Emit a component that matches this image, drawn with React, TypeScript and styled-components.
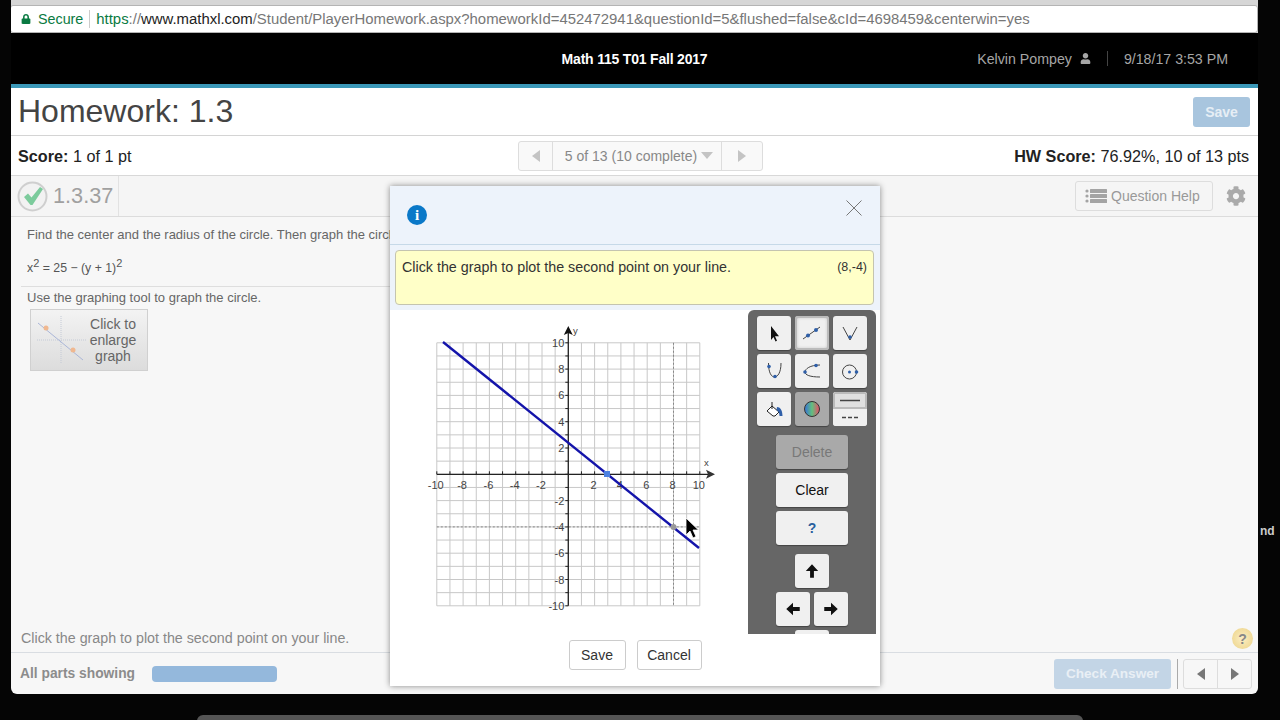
import React from 'react';
import styled, { createGlobalStyle } from 'styled-components';
import { FaCog, FaLock, FaUser } from 'react-icons/fa';

const GlobalStyle = createGlobalStyle`
  html, body {
    margin: 0;
    padding: 0;
    height: 720px;
    overflow: hidden;
    background: #050505;
    font-family: "Liberation Sans", Arial, sans-serif;
  }
`;

const Screen = styled.div`
  position: relative;
  width: 1280px;
  height: 720px;
  overflow: hidden;
`;

const Page = styled.div`
  display: flex;
  flex-direction: column;
  width: 1247px;
  height: 694px;
  margin-left: 11px;
  border-radius: 0 0 6px 6px;
  overflow: hidden;
  background: #f7f7f7;
`;

const Chrome = styled.div`
  height: 33px;
  padding-top: 5px;
  box-sizing: border-box;
  background: #d6d6d6;
`;

const AddressBar = styled.div`
  display: flex;
  align-items: center;
  height: 28px;
  box-sizing: border-box;
  margin-left: -1px;
  padding-left: 10px;
  background: #fff;
  border: 1px solid #b4b4b4;
  border-radius: 3px;
  font-size: 14.9px;
  color: #777;
  white-space: nowrap;
`;

const Secure = styled.span`
  display: flex;
  align-items: center;
  gap: 7px;
  padding-right: 6px;
  margin-right: 6px;
  border-right: 1px solid #ccc;
  color: #0a7a42;
  font-size: 14.3px;
  line-height: 18px;
`;

const Host = styled.span`
  color: #222;
`;

const Scheme = styled.span`
  color: #0a7a42;
`;

const TopBar = styled.div`
  display: grid;
  grid-template-columns: 1fr auto 1fr;
  align-items: center;
  height: 51px;
  background: #000;
  border-bottom: 4px solid #3b98b8;
`;

const CourseName = styled.div`
  grid-column: 2;
  color: #fff;
  font-size: 14px;
  font-weight: bold;
  letter-spacing: -0.2px;
`;

const UserInfo = styled.div`
  display: flex;
  justify-content: flex-end;
  align-items: center;
  padding-right: 30px;
  color: #a6a6a6;
  font-size: 14.2px;
`;

const UserDivider = styled.span`
  width: 1px;
  height: 15px;
  margin: 0 16px;
  background: #444;
`;

const TitleRow = styled.div`
  display: flex;
  align-items: center;
  justify-content: space-between;
  height: 47px;
  padding: 0 8px 0 7px;
  background: #fff;
  border-bottom: 1px solid #d4d4d4;
`;

const Title = styled.h1`
  margin: 0;
  color: #444;
  font-size: 32px;
  font-weight: normal;
`;

const SaveTop = styled.button`
  width: 57px;
  height: 30px;
  padding: 0;
  border: 0;
  border-radius: 3px;
  background: #a8c5de;
  color: #e6eef5;
  font: bold 14px "Liberation Sans", Arial, sans-serif;
`;

const ScoreRow = styled.div`
  display: grid;
  grid-template-columns: 1fr auto 1fr;
  align-items: center;
  height: 39px;
  padding: 0 9px 0 7px;
  background: #fff;
  border-bottom: 1px solid #d8d8d8;
  color: #222;
  font-size: 16.2px;
`;

const ScoreText = styled.div`
  padding-top: 1px;
`;

const ScoreRight = styled(ScoreText)`
  text-align: right;
`;

const Pager = styled.div`
  display: flex;
  height: 30px;
  margin-left: 14px;
  border: 1px solid #ddd;
  border-radius: 3px;
  box-sizing: border-box;
  background: #f9f9f9;
  color: #888;
  font-size: 14px;
`;

const PagerArrow = styled.div<{ $w: number }>`
  display: flex;
  align-items: center;
  justify-content: center;
  width: ${(p) => p.$w}px;
`;

const PagerLabel = styled.div`
  display: flex;
  align-items: center;
  gap: 4px;
  width: 170px;
  box-sizing: border-box;
  padding-left: 4px;
  justify-content: center;
  border-left: 1px solid #ddd;
  border-right: 1px solid #ddd;
`;

const Triangle = styled.span<{ $dir: 'left' | 'right' | 'down'; $color?: string; $size?: number }>`
  display: inline-block;
  width: 0;
  height: 0;
  ${({ $dir, $color = '#c4c4c4', $size = 6 }) =>
    $dir === 'left'
      ? `border-top: ${$size}px solid transparent; border-bottom: ${$size}px solid transparent; border-right: ${$size * 1.4}px solid ${$color};`
      : $dir === 'right'
        ? `border-top: ${$size}px solid transparent; border-bottom: ${$size}px solid transparent; border-left: ${$size * 1.4}px solid ${$color};`
        : `border-left: ${$size}px solid transparent; border-right: ${$size}px solid transparent; border-top: ${$size * 1.3}px solid ${$color};`}
`;

const QuestionRow = styled.div`
  display: flex;
  align-items: center;
  height: 40px;
  background: #f5f5f5;
  border-bottom: 1px solid #dcdcdc;
  flex-shrink: 0;
`;

const QuestionId = styled.div`
  display: flex;
  align-items: center;
  gap: 5px;
  height: 100%;
  width: 108px;
  box-sizing: border-box;
  padding-left: 6px;
  border-right: 1px solid #e2e2e2;
  color: #a0a0a0;
  font-size: 21.7px;
`;

const HelpButton = styled.div`
  display: flex;
  align-items: center;
  gap: 4px;
  width: 138px;
  height: 30px;
  box-sizing: border-box;
  margin-left: auto;
  padding-left: 9px;
  border: 1px solid #ddd;
  border-radius: 3px;
  color: #999;
  font-size: 14px;
`;

const GearSlot = styled.div`
  display: flex;
  justify-content: center;
  width: 45px;
  color: #aaa;
  font-size: 20px;
`;

const Content = styled.div`
  flex: 1;
  padding: 10px 0 0 16px;
  color: #666;
  font-size: 13px;
`;

const Prompt = styled.p`
  margin: 0;
  line-height: 16px;
  white-space: nowrap;
`;

const Equation = styled.p`
  width: 500px;
  margin: 16px 0 0 -6px;
  padding: 0 0 9px 6px;
  line-height: 18px;
  border-bottom: 1px solid #dedede;
  color: #555;
  font-size: 12.3px;
  sup {
    font-size: 11px;
    line-height: 0;
  }
`;

const Hint = styled.p`
  margin: 3px 0 3px;
  line-height: 16px;
`;

const EnlargeGraph = styled.div`
  display: flex;
  align-items: center;
  width: 118px;
  height: 62px;
  box-sizing: border-box;
  margin: 3px 0 0 3px;
  border: 1px solid #d0d0d0;
  background: linear-gradient(#f3f3f3, #dcdcdc);
  color: #666;
  font-size: 14px;
  line-height: 16px;
  text-align: center;
`;

const EnlargeLabel = styled.div`
  width: 50px;
  margin-left: 1px;
`;

const StatusLine = styled.div`
  display: flex;
  align-items: center;
  justify-content: space-between;
  height: 27px;
  padding: 0 5px 0 10px;
  border-bottom: 1px solid #d9dde2;
  color: #888;
  font-size: 14.27px;
`;

const StatusText = styled.span`
  margin-bottom: 2px;
`;

const HelpDot = styled.div`
  display: flex;
  align-items: center;
  justify-content: center;
  width: 21px;
  height: 21px;
  border-radius: 50%;
  background: radial-gradient(#fbeec4, #ecd286);
  color: #888;
  font-size: 14px;
  font-weight: bold;
`;

const Footer = styled.div`
  display: flex;
  align-items: center;
  height: 41px;
  padding: 0 6px 0 9px;
  color: #8c8c8c;
  font-size: 13.8px;
  font-weight: bold;
`;

const ProgressBar = styled.div`
  width: 125px;
  height: 16px;
  margin-left: 17px;
  border-radius: 4px;
  background: #94b8dc;
`;

const CheckAnswer = styled.button`
  width: 117px;
  height: 30px;
  padding: 0;
  margin-left: auto;
  border: 0;
  border-radius: 3px;
  background: #c3d5e6;
  color: #e9eff5;
  font: bold 13.6px "Liberation Sans", Arial, sans-serif;
`;

const FooterDivider = styled.span`
  width: 1px;
  height: 30px;
  margin: 0 5px 0 6px;
  background: #aaa;
`;

const NavGroup = styled.div`
  display: flex;
  height: 30px;
  width: 69px;
  box-sizing: border-box;
  border: 1px solid #ddd;
  border-radius: 3px;
`;

const NavCell = styled.div`
  flex: 1;
  display: flex;
  align-items: center;
  justify-content: center;
  & + & {
    border-left: 1px solid #ddd;
  }
`;

const Dock = styled.div`
  width: 886px;
  height: 6px;
  margin: 21px 0 0 197px;
  border-radius: 6px 6px 0 0;
  background: #555;
`;

const EdgeText = styled.span`
  position: absolute;
  left: 1260px;
  top: 524px;
  color: #ccc;
  font-size: 12px;
  font-weight: bold;
`;

const Dialog = styled.div`
  position: absolute;
  left: 390px;
  top: 186px;
  display: flex;
  flex-direction: column;
  width: 490px;
  height: 500px;
  background: #fff;
  box-shadow: 0 0 6px rgba(0, 0, 0, 0.45);
`;

const DialogHead = styled.div`
  display: flex;
  align-items: flex-start;
  justify-content: space-between;
  height: 59px;
  box-sizing: border-box;
  padding: 14px 18px 0 17px;
  background: #edf3fb;
  border-bottom: 1px solid #c6d9e8;
`;

const InfoBadge = styled.div`
  display: flex;
  align-items: center;
  justify-content: center;
  width: 20px;
  height: 20px;
  margin-top: 5px;
  border-radius: 50%;
  background: #0a78c8;
  color: #fff;
  font: bold 15px "Liberation Serif", serif;
`;

const HintArea = styled.div`
  height: 65px;
  box-sizing: border-box;
  padding: 5px 6px 5px 5px;
  background: #edf3fb;
`;

const HintBox = styled.div`
  display: flex;
  justify-content: space-between;
  height: 55px;
  box-sizing: border-box;
  padding: 8px 6px 0 6px;
  background: #ffffc8;
  border: 1px solid #c4c4b0;
  border-radius: 4px;
  color: #333;
  font-size: 14.3px;
`;

const Coordinates = styled.span`
  font-size: 12.5px;
  line-height: 16px;
`;

const DialogBody = styled.div`
  display: flex;
  height: 324px;
`;

const GraphArea = styled.div`
  width: 358px;
  padding: 10px 0 0 30px;
  box-sizing: border-box;
`;

const ToolPanel = styled.div`
  display: flex;
  flex-direction: column;
  align-items: center;
  width: 128px;
  height: 324px;
  box-sizing: border-box;
  padding-top: 6px;
  overflow: hidden;
  border-radius: 6px 6px 0 0;
  background: #666;
`;

const ToolGrid = styled.div`
  display: grid;
  grid-template-columns: repeat(3, 34px);
  grid-auto-rows: 34px;
  gap: 4px;
  margin-bottom: 9px;
`;

const ToolButton = styled.div<{ $state?: 'active' | 'muted' }>`
  display: flex;
  align-items: center;
  justify-content: center;
  box-sizing: border-box;
  border-radius: 3px;
  background: ${(p) => (p.$state === 'muted' ? '#a9a9a9' : '#f0f0f0')};
  box-shadow: ${(p) =>
    p.$state === 'active' ? 'inset 0 0 0 2px #bbb, inset 0 0 4px #888' : '0 1px 1px #444'};
`;

const LineStyleToggle = styled.div`
  display: flex;
  flex-direction: column;
  border-radius: 3px;
  overflow: hidden;
  background: #f0f0f0;
`;

const LineStyleOption = styled.div<{ $on?: boolean }>`
  flex: 1;
  display: flex;
  align-items: center;
  justify-content: center;
  background: ${(p) => (p.$on ? '#e0e0e0' : '#f0f0f0')};
  box-shadow: ${(p) => (p.$on ? 'inset 0 0 0 2px #bbb' : 'none')};
`;

const WideButton = styled.div<{ $off?: boolean; $help?: boolean }>`
  display: flex;
  align-items: center;
  justify-content: center;
  flex-shrink: 0;
  width: 72px;
  height: 34px;
  margin-bottom: 4px;
  border-radius: 3px;
  background: ${(p) => (p.$off ? '#a9a9a9' : '#f0f0f0')};
  box-shadow: 0 1px 1px #444;
  color: ${(p) => (p.$off ? '#787878' : p.$help ? '#2a5f9e' : '#111')};
  font-size: 14px;
  font-weight: ${(p) => (p.$help ? 'bold' : 'normal')};
`;

const ArrowRow = styled.div<{ $first?: boolean }>`
  display: flex;
  flex-shrink: 0;
  gap: 4px;
  margin-top: ${(p) => (p.$first ? '5px' : '0')};
  margin-bottom: 4px;
`;

const ArrowButton = styled.div`
  display: flex;
  align-items: center;
  justify-content: center;
  width: 34px;
  height: 34px;
  border-radius: 3px;
  background: #f0f0f0;
  box-shadow: 0 1px 1px #444;
`;

const DialogFooter = styled.div`
  flex: 1;
  display: flex;
  align-items: flex-start;
  justify-content: center;
  gap: 11px;
  padding: 6px 0 0 0;
`;

const DialogButton = styled.button<{ $w: number }>`
  width: ${(p) => p.$w}px;
  height: 30px;
  padding: 0;
  border: 1px solid #ccc;
  border-radius: 3px;
  background: #fff;
  color: #333;
  font: 14px "Liberation Sans", Arial, sans-serif;
`;

const CheckMark = () => (
  <svg width="31" height="31" viewBox="0 0 31 31">
    <circle cx="15.5" cy="15.5" r="14" fill="#f2f2f2" stroke="#cfcfcf" strokeWidth="2" />
    <path d="M7 16l4-3.500 3.500 4L23 6l3 2-10.500 16h-2z" fill="#7ccb9c" />
  </svg>
);

const ListIcon = () => (
  <svg width="22" height="16" viewBox="0 0 22 16" fill="#a4a4a4">
    <circle cx="2" cy="3" r="1.600" />
    <circle cx="2" cy="8" r="1.600" />
    <circle cx="2" cy="13" r="1.600" />
    <rect x="5" y="1" width="17" height="4" rx="0.5" />
    <rect x="5" y="6" width="17" height="4" rx="0.5" />
    <rect x="5" y="11" width="17" height="4" rx="0.5" />
  </svg>
);

const MiniGraph = () => (
  <svg width="56" height="60" viewBox="0 0 56 60">
    <path d="M30 6v47" stroke="#c4cad6" strokeDasharray="1 1" />
    <path d="M6 30h50" stroke="#c4cad6" strokeDasharray="1 1" />
    <path d="M7 13l45 37" stroke="#aab6d8" />
    <circle cx="15" cy="18" r="2.5" fill="#f0b890" />
    <circle cx="42" cy="40" r="2.5" fill="#f0b890" />
  </svg>
);

const ticks = Array.from({ length: 21 }, (_, i) => i - 10);
const evens = ticks.filter((v) => v % 2 === 0 && v !== 0);
const X0 = 148.3;
const Y0 = 154.3;
const UNIT = 13.15;

const Graph = () => (
  <svg width="310" height="300" viewBox="0 0 310 300">
    {ticks.map((v) => (
      <g key={v} stroke="#c8c8c8" strokeWidth="1">
        <line x1={X0 + v * UNIT} x2={X0 + v * UNIT} y1={Y0 - 10 * UNIT} y2={Y0 + 10 * UNIT} />
        <line y1={Y0 + v * UNIT} y2={Y0 + v * UNIT} x1={X0 - 10 * UNIT} x2={X0 + 10 * UNIT} />
      </g>
    ))}
    {ticks.map((v) => (
      <g key={v} stroke="#222" strokeWidth="1">
        <line x1={X0 + v * UNIT} x2={X0 + v * UNIT} y1={Y0 - 3} y2={Y0} />
        <line y1={Y0 + v * UNIT} y2={Y0 + v * UNIT} x1={X0 - 3} x2={X0} />
      </g>
    ))}
    <line x1={X0 + 8 * UNIT} x2={X0 + 8 * UNIT} y1={Y0 - 10 * UNIT} y2={Y0 + 10 * UNIT} stroke="#888" strokeDasharray="2 2" />
    <line x1={X0 - 10 * UNIT} x2={X0 + 10 * UNIT} y1={Y0 + 4 * UNIT} y2={Y0 + 4 * UNIT} stroke="#888" strokeDasharray="2 2" />
    <line x1={X0 - 10 * UNIT} x2="289" y1={Y0} y2={Y0} stroke="#222" strokeWidth="1.3" />
    <line x1={X0} x2={X0} y1="11" y2={Y0 + 10 * UNIT} stroke="#222" strokeWidth="1.3" />
    <path d="M295 154.3l-9-4.5 2 4.5-2 4.5z" fill="#333" />
    <path d="M148.3 6l-4.5 9 4.5-2 4.5 2z" fill="#111" />
    <g fontFamily='"Liberation Sans", Arial, sans-serif' fontSize="11" fill="#444">
      <text x="284" y="146" fontSize="9.5">x</text>
      <text x="153" y="14" fontSize="9.5">y</text>
      {evens.map((v) => (
        <text key={`x${v}`} x={X0 + v * UNIT - 1} y={Y0 + 15} textAnchor="middle">{v}</text>
      ))}
      {evens.map((v) => (
        <text key={`y${v}`} x={X0 - 4} y={Y0 - v * UNIT + 4} textAnchor="end">{v}</text>
      ))}
    </g>
    <line x1="23" y1="22" x2="279" y2="228" stroke="#1414aa" strokeWidth="2.4" />
    <rect x="184" y="151" width="6" height="6" fill="#4c80e0" />
    <circle cx={X0 + 8 * UNIT} cy={Y0 + 4 * UNIT} r="3" fill="#999" />
    <path d="M266 198v17l4-4 3 7 3-1.500-3-6.500h5.500z" fill="#000" stroke="#fff" strokeWidth="0.8" />
  </svg>
);

const BLUE = '#2f5fa8';

const toolIcons: Array<React.ReactNode> = [
  <path key="a" d="M14 10v14l2.500-3 2 4.500 1.500-.7-2-4.500H22z" fill="#111" />,
  <g key="b">
    <path d="M8 23L25 11" stroke="#444" />
    <circle cx="13" cy="19.500" r="2" fill={BLUE} />
    <circle cx="21" cy="14" r="2" fill={BLUE} />
  </g>,
  <g key="c">
    <path d="M10 11l7 13 7-13" stroke="#444" fill="none" />
    <circle cx="17" cy="21" r="1.800" fill={BLUE} />
  </g>,
  <g key="d">
    <path d="M11.500 9c0 10 3 14 6 14s6.500-4 6.500-14" stroke="#444" fill="none" />
    <circle cx="12" cy="12.500" r="1.800" fill={BLUE} />
    <circle cx="18" cy="22.500" r="1.800" fill={BLUE} />
  </g>,
  <g key="e">
    <path d="M25 11C15 11 10 15 10 18s5 5 15 5" stroke="#444" fill="none" />
    <circle cx="10" cy="18" r="1.800" fill={BLUE} />
    <circle cx="21" cy="11.500" r="1.800" fill={BLUE} />
  </g>,
  <g key="f">
    <circle cx="16.500" cy="18" r="7" stroke="#444" fill="none" />
    <circle cx="16.500" cy="18" r="1.500" fill={BLUE} />
    <circle cx="23.500" cy="18" r="1.800" fill={BLUE} />
  </g>,
  <g key="g">
    <path d="M10 19l5-5 7 6-4 4h-2z" fill="#fff" stroke="#222" />
    <path d="M15 10v7" stroke="#222" />
    <path d="M20 15c3 0 5.500 3 5.500 9h-3c0-3-1-5-3-6z" fill={BLUE} />
  </g>,
  <g key="h">
    <defs>
      <linearGradient id="colorBands" x1="0" x2="1" y1="0" y2="0">
        <stop offset="0.1" stopColor="#3f7fc8" />
        <stop offset="0.5" stopColor="#62c07e" />
        <stop offset="0.9" stopColor="#d0606c" />
      </linearGradient>
    </defs>
    <circle cx="17" cy="17" r="7.500" fill="url(#colorBands)" stroke="#333" />
  </g>,
];

const Arrow = ({ rotate }: { rotate: number }) => (
  <svg width="18" height="18" viewBox="0 0 16 16">
    <path d="M8 2l5.500 6H9.700v6H6.300V8H2.500z" fill="#111" transform={`rotate(${rotate} 8 8)`} />
  </svg>
);

const App: React.FunctionComponent = () => (
  <Screen>
    <GlobalStyle />
    <Page>
      <Chrome>
        <AddressBar>
          <Secure>
            <FaLock size={10} />
            Secure
          </Secure>
          <span>
            <Scheme>https</Scheme>://<Host>www.mathxl.com</Host>
            /Student/PlayerHomework.aspx?homeworkId=452472941&amp;questionId=5&amp;flushed=false&amp;cId=4698459&amp;centerwin=yes
          </span>
        </AddressBar>
      </Chrome>
      <TopBar>
        <CourseName>Math 115 T01 Fall 2017</CourseName>
        <UserInfo>
          Kelvin Pompey
          <FaUser size={11} style={{ marginLeft: 8 }} />
          <UserDivider />
          9/18/17 3:53 PM
        </UserInfo>
      </TopBar>
      <TitleRow>
        <Title>Homework: 1.3</Title>
        <SaveTop>Save</SaveTop>
      </TitleRow>
      <ScoreRow>
        <ScoreText>
          <b>Score:</b> 1 of 1 pt
        </ScoreText>
        <Pager>
          <PagerArrow $w={33}>
            <Triangle $dir="left" />
          </PagerArrow>
          <PagerLabel>
            5 of 13 (10 complete)
            <Triangle $dir="down" />
          </PagerLabel>
          <PagerArrow $w={40}>
            <Triangle $dir="right" />
          </PagerArrow>
        </Pager>
        <ScoreRight>
          <b>HW Score:</b> 76.92%, 10 of 13 pts
        </ScoreRight>
      </ScoreRow>
      <QuestionRow>
        <QuestionId>
          <CheckMark />
          1.3.37
        </QuestionId>
        <HelpButton>
          <ListIcon />
          Question Help
        </HelpButton>
        <GearSlot>
          <FaCog />
        </GearSlot>
      </QuestionRow>
      <Content>
        <Prompt>Find the center and the radius of the circle. Then graph the circle.</Prompt>
        <Equation>
          x<sup>2</sup> = 25 − (y + 1)<sup>2</sup>
        </Equation>
        <Hint>Use the graphing tool to graph the circle.</Hint>
        <EnlargeGraph>
          <MiniGraph />
          <EnlargeLabel>Click to enlarge graph</EnlargeLabel>
        </EnlargeGraph>
      </Content>
      <StatusLine>
        <StatusText>Click the graph to plot the second point on your line.</StatusText>
        <HelpDot>?</HelpDot>
      </StatusLine>
      <Footer>
        All parts showing
        <ProgressBar />
        <CheckAnswer>Check Answer</CheckAnswer>
        <FooterDivider />
        <NavGroup>
          <NavCell>
            <Triangle $dir="left" $color="#777" />
          </NavCell>
          <NavCell>
            <Triangle $dir="right" $color="#777" />
          </NavCell>
        </NavGroup>
      </Footer>
    </Page>
    <Dock />
    <EdgeText>nd</EdgeText>
    <Dialog>
      <DialogHead>
        <InfoBadge>i</InfoBadge>
        <svg width="16" height="16" viewBox="0 0 16 16">
          <path d="M0.500 0.500l15 15M15.500 0.500l-15 15" stroke="#777" />
        </svg>
      </DialogHead>
      <HintArea>
        <HintBox>
          Click the graph to plot the second point on your line.
          <Coordinates>(8,-4)</Coordinates>
        </HintBox>
      </HintArea>
      <DialogBody>
        <GraphArea>
          <Graph />
        </GraphArea>
        <ToolPanel>
          <ToolGrid>
            {toolIcons.map((icon, index) => (
              <ToolButton key={index} $state={index === 1 ? 'active' : index === 7 ? 'muted' : undefined}>
                <svg width="34" height="34" viewBox="0 0 34 34">
                  {icon}
                </svg>
              </ToolButton>
            ))}
            <LineStyleToggle>
              <LineStyleOption $on>
                <svg width="20" height="3">
                  <path d="M0 1.500h20" stroke="#444" strokeWidth="1.500" />
                </svg>
              </LineStyleOption>
              <LineStyleOption>
                <svg width="16" height="3">
                  <path d="M0 1.500h16" stroke="#444" strokeWidth="1.500" strokeDasharray="4 2" />
                </svg>
              </LineStyleOption>
            </LineStyleToggle>
          </ToolGrid>
          <WideButton $off>Delete</WideButton>
          <WideButton>Clear</WideButton>
          <WideButton $help>?</WideButton>
          <ArrowRow $first>
            <ArrowButton>
              <Arrow rotate={0} />
            </ArrowButton>
          </ArrowRow>
          <ArrowRow>
            <ArrowButton>
              <Arrow rotate={-90} />
            </ArrowButton>
            <ArrowButton>
              <Arrow rotate={90} />
            </ArrowButton>
          </ArrowRow>
          <ArrowRow>
            <ArrowButton />
          </ArrowRow>
        </ToolPanel>
      </DialogBody>
      <DialogFooter>
        <DialogButton $w={57}>Save</DialogButton>
        <DialogButton $w={65}>Cancel</DialogButton>
      </DialogFooter>
    </Dialog>
  </Screen>
);

export default App;
